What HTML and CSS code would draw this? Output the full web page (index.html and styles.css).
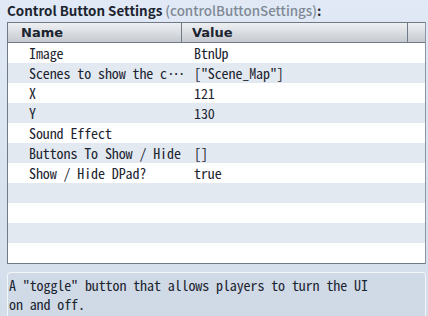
FILE: index.html
```html
<!DOCTYPE html>
<html>
<head>
<meta charset="utf-8">
<link rel="stylesheet" href="styles.css">
</head>
<body>
<div class="title"><b>Control Button Settings</b> <span class="code">(controlButtonSettings)</span><b>:</b></div>
<div class="table">
  <div class="head">
    <div class="hcell hname">Name</div>
    <div class="hcell hvalue">Value</div>
    <div class="hcell hscroll"></div>
  </div>
  <div class="row"><div class="name">Image</div><div class="value">BtnUp</div></div>
  <div class="row alt"><div class="name">Scenes to show the c<span class="ell">···</span></div><div class="value">["Scene_Map"]</div></div>
  <div class="row"><div class="name">X</div><div class="value">121</div></div>
  <div class="row alt"><div class="name">Y</div><div class="value">130</div></div>
  <div class="row"><div class="name">Sound Effect</div><div class="value"></div></div>
  <div class="row alt"><div class="name">Buttons To Show / Hide</div><div class="value">[]</div></div>
  <div class="row"><div class="name">Show / Hide DPad?</div><div class="value">true</div></div>
  <div class="row alt"></div>
  <div class="row"></div>
  <div class="row alt"></div>
  <div class="row"></div>
</div>
<div class="desc">A "toggle" button that allows players to turn the UI<br>on and off.</div>
</body>
</html>
```
FILE: styles.css
```css
html, body {
  margin: 0;
  padding: 0;
}
body {
  width: 428px;
  height: 316px;
  overflow: hidden;
  background: linear-gradient(#e0e9f5, #d3deea);
  font-family: "Noto Sans Mono CJK JP", "DejaVu Sans Mono", monospace;
}
.title {
  font-family: "Noto Sans CJK JP", "Noto Sans", sans-serif;
  font-size: 13.4px;
  height: 22px;
  line-height: 21px;
  padding-left: 7px;
  color: #1c2430;
  white-space: nowrap;
}
.title b { font-weight: bold; }
.title .code { color: #7f8995; font-weight: 500; }
.table {
  margin-left: 7px;
  width: 417px;
  border: 1px solid #707986;
  border-right-color: #8a96a4;
  background: #ffffff;
}
.head {
  display: grid;
  grid-template-columns: 174px 1fr 17px;
  height: 19px;
  border-bottom: 1px solid #707986;
  background: linear-gradient(#eef0f3, #c5cad0);
}
.hcell {
  font-family: "DejaVu Sans", sans-serif;
  font-weight: bold;
  font-size: 13px;
  line-height: 19px;
  color: #1c2430;
}
.hname { padding-left: 13px; border-right: 1px solid #707986; }
.hvalue { padding-left: 10px; border-right: 1px solid #707986; }
.row {
  display: grid;
  grid-template-columns: 186px 1fr;
  height: 20px;
  font-size: 14px;
  line-height: 20px;
  color: #1c2430;
  letter-spacing: -0.1px;
}
.row.alt { background: #e2e9f0; }
.name { padding-left: 21px; white-space: nowrap; overflow: hidden; }
.ell { letter-spacing: -2.5px; }
.value { white-space: nowrap; }
.desc {
  margin: 8px 2px 0 7px;
  border: 1px solid #f2f6fa;
  border-bottom: none;
  border-radius: 4px 4px 0 0;
  background: #cfdae6;
  height: 42px;
  padding: 3px 0 0 1px;
  font-size: 14px;
  line-height: 19px;
  color: #1c2430;
  letter-spacing: -0.1px;
}
```
